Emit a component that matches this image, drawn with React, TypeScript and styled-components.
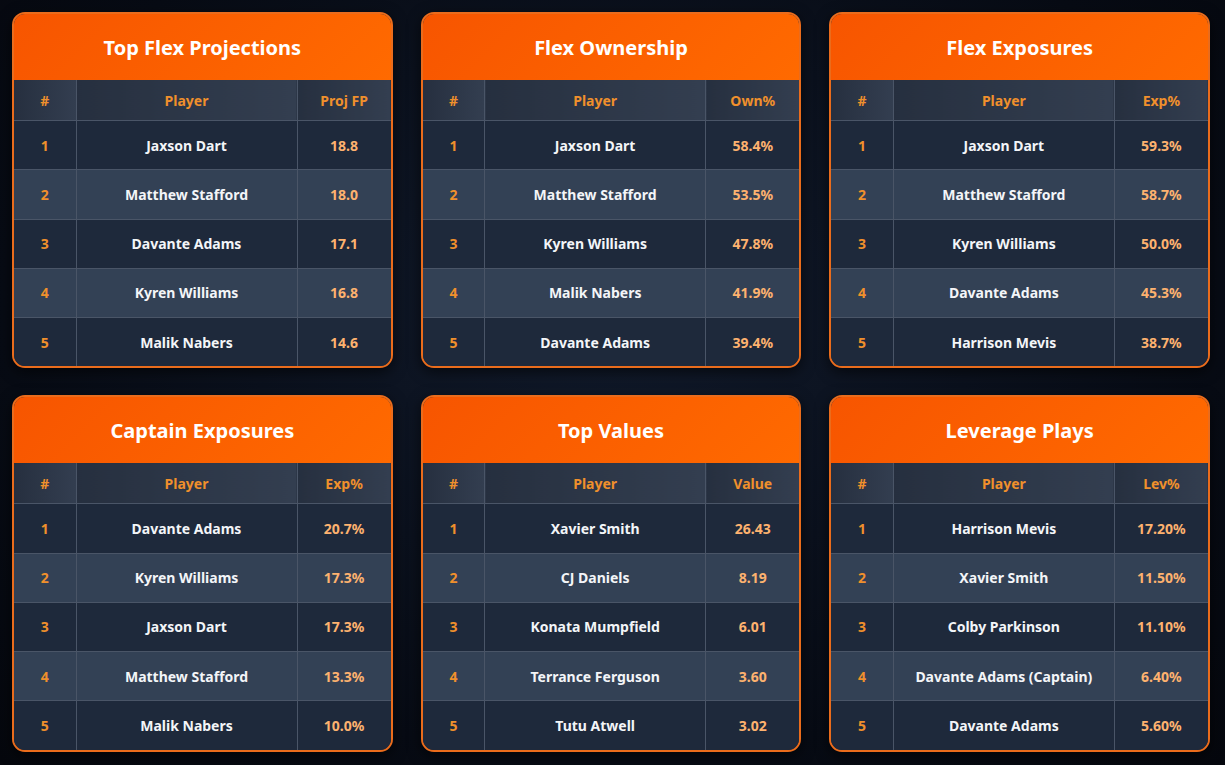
import React from "react";
import styled, { createGlobalStyle } from "styled-components";

const Global = createGlobalStyle`
  html, body { margin: 0; padding: 0; }
  body {
    background: radial-gradient(ellipse at 50% 40%, #111a2b 0%, #070b14 70%, #05070d 100%);
    min-height: 765px;
    font-family: "Noto Sans", "Open Sans", "DejaVu Sans", sans-serif;
  }
`;

const Page = styled.div`
  display: grid;
  grid-template-columns: repeat(3, 1fr);
  column-gap: 28px;
  row-gap: 27px;
  padding: 12px 15px 12px 12px;
  box-sizing: border-box;
  width: 1225px;
`;

const Card = styled.section`
  border: 2px solid #ea6c1c;
  border-radius: 13px;
  overflow: hidden;
  background: #1e293b;
  box-shadow: 0 4px 14px rgba(0, 0, 0, 0.6);
`;

const Header = styled.div`
  height: 66px;
  display: flex;
  align-items: center;
  justify-content: center;
  background: linear-gradient(135deg, #f75500 0%, #ff6a00 100%);
`;

const Title = styled.h2`
  margin: 0;
  color: #ffffff;
  font-size: 20px;
  font-weight: 700;
  line-height: 1;
  padding-top: 2px;
`;

const Table = styled.table`
  width: 100%;
  border-collapse: collapse;
  table-layout: fixed;
`;

const Th = styled.th`
  height: 40px;
  padding: 0;
  color: #f0902c;
  font-size: 14px;
  font-weight: 700;
  text-align: center;
  background: linear-gradient(90deg, #262f3f 0%, #333e50 100%);
  border-left: 1px solid #4a5567;
  &:first-child { border-left: none; }
`;

const Tr = styled.tr<{ $alt: boolean }>`
  background: ${(p) => (p.$alt ? "#334155" : "#1e293b")};
`;

const Td = styled.td<{ $kind: "rank" | "name" | "value" }>`
  height: 48.25px;
  padding: 0;
  text-align: center;
  font-size: 14px;
  font-weight: 700;
  color: ${(p) => (p.$kind === "rank" ? "#f0902c" : p.$kind === "value" ? "#fdb26f" : "#f3f5f8")};
  border-top: 1px solid #4a5567;
  border-left: 1px solid #4a5567;
  &:first-child { border-left: none; }
`;

type Row = [string, string];
type Data = { title: string; col: string; rows: Row[] };

const data: Data[] = [
  {
    title: "Top Flex Projections",
    col: "Proj FP",
    rows: [
      ["Jaxson Dart", "18.8"],
      ["Matthew Stafford", "18.0"],
      ["Davante Adams", "17.1"],
      ["Kyren Williams", "16.8"],
      ["Malik Nabers", "14.6"],
    ],
  },
  {
    title: "Flex Ownership",
    col: "Own%",
    rows: [
      ["Jaxson Dart", "58.4%"],
      ["Matthew Stafford", "53.5%"],
      ["Kyren Williams", "47.8%"],
      ["Malik Nabers", "41.9%"],
      ["Davante Adams", "39.4%"],
    ],
  },
  {
    title: "Flex Exposures",
    col: "Exp%",
    rows: [
      ["Jaxson Dart", "59.3%"],
      ["Matthew Stafford", "58.7%"],
      ["Kyren Williams", "50.0%"],
      ["Davante Adams", "45.3%"],
      ["Harrison Mevis", "38.7%"],
    ],
  },
  {
    title: "Captain Exposures",
    col: "Exp%",
    rows: [
      ["Davante Adams", "20.7%"],
      ["Kyren Williams", "17.3%"],
      ["Jaxson Dart", "17.3%"],
      ["Matthew Stafford", "13.3%"],
      ["Malik Nabers", "10.0%"],
    ],
  },
  {
    title: "Top Values",
    col: "Value",
    rows: [
      ["Xavier Smith", "26.43"],
      ["CJ Daniels", "8.19"],
      ["Konata Mumpfield", "6.01"],
      ["Terrance Ferguson", "3.60"],
      ["Tutu Atwell", "3.02"],
    ],
  },
  {
    title: "Leverage Plays",
    col: "Lev%",
    rows: [
      ["Harrison Mevis", "17.20%"],
      ["Xavier Smith", "11.50%"],
      ["Colby Parkinson", "11.10%"],
      ["Davante Adams (Captain)", "6.40%"],
      ["Davante Adams", "5.60%"],
    ],
  },
];

export default function App() {
  return (
    <>
      <Global />
      <Page>
        {data.map((d) => (
          <Card key={d.title}>
            <Header>
              <Title>{d.title}</Title>
            </Header>
            <Table>
              <colgroup>
                <col style={{ width: 62 }} />
                <col style={{ width: 221 }} />
                <col />
              </colgroup>
              <thead>
                <tr>
                  <Th>#</Th>
                  <Th>Player</Th>
                  <Th>{d.col}</Th>
                </tr>
              </thead>
              <tbody>
                {d.rows.map((r, i) => (
                  <Tr key={i} $alt={i % 2 === 1}>
                    <Td $kind="rank">{i + 1}</Td>
                    <Td $kind="name">{r[0]}</Td>
                    <Td $kind="value">{r[1]}</Td>
                  </Tr>
                ))}
              </tbody>
            </Table>
          </Card>
        ))}
      </Page>
    </>
  );
}
